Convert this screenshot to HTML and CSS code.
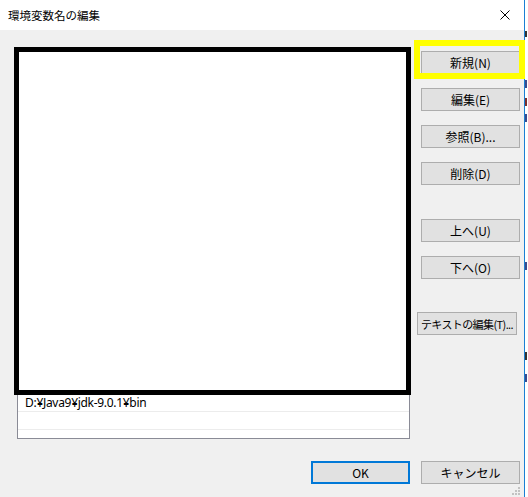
FILE: index.html
```html
<!DOCTYPE html>
<html lang="ja">
<head>
    <meta charset="utf-8">
    <title>環境変数名の編集</title>
    <link rel="stylesheet" href="styles.css">
</head>
<body>

<div class="screen">
    <div class="dialog">
        <div class="titlebar">
            <span class="title">環境変数名の編集</span>
            <span class="close">
                <svg width="10" height="10" viewBox="0 0 10 10"><path d="M0.5 0.5 L9.5 9.5 M9.5 0.5 L0.5 9.5" stroke="#000" stroke-width="1"/></svg>
            </span>
        </div>

        <div class="content">
            <div class="list-wrap">
                <div class="list">
                    <div class="list-hidden"></div>
                    <div class="row">D:¥Java9¥jdk-9.0.1¥bin</div>
                    <div class="row"></div>
                </div>
                <!-- redaction box over the list entries -->
                <div class="mask"></div>
            </div>

            <div class="side">
                <div class="btn-wrap">
                    <button class="btn">新規(N)</button>
                    <div class="mark"></div>
                </div>
                <button class="btn">編集(E)</button>
                <button class="btn">参照(B)...</button>
                <button class="btn">削除(D)</button>
                <button class="btn group">上へ(U)</button>
                <button class="btn">下へ(O)</button>
                <button class="btn group wide">テキストの編集(T)...</button>
            </div>
        </div>

        <div class="footer">
            <button class="btn default">OK</button>
            <button class="btn">キャンセル</button>
        </div>

        <svg class="grip" width="9" height="9" viewBox="0 0 9 9">
            <rect x="6" y="0" width="2" height="2" fill="#c2c2c2"/>
            <rect x="3" y="3" width="2" height="2" fill="#c2c2c2"/>
            <rect x="6" y="3" width="2" height="2" fill="#c2c2c2"/>
            <rect x="0" y="6" width="2" height="2" fill="#c2c2c2"/>
            <rect x="3" y="6" width="2" height="2" fill="#c2c2c2"/>
            <rect x="6" y="6" width="2" height="2" fill="#c2c2c2"/>
        </svg>
    </div>

    <!-- bit of the window behind -->
    <div class="behind">
        <span class="frag f1"></span>
        <span class="frag f2"></span>
        <span class="frag f3"></span>
        <span class="frag f4"></span>
        <span class="frag f5"></span>
        <span class="frag f6"></span>
        <span class="frag f7"></span>
    </div>
</div>

</body>
</html>
```

FILE: styles.css
```css
:root {
    --face: #f0f0f0;
    --btn-bg: #e1e1e1;
    --btn-border: #adadad;
    --accent: #1a7fd4;
    --ui-font: "Noto Sans", "Noto Sans CJK JP", sans-serif;
}

body {
    margin: 0;
    font-family: var(--ui-font);
    font-size: 12px;
    color: #000;
}

.screen {
    display: flex;
    width: 528px;
    height: 497px;
    overflow: hidden;
}

.dialog {
    position: relative;
    width: 524px;
    background: var(--face);
    border-right: 1px solid var(--accent);
}

.titlebar {
    height: 30px;
    background: #fff;
    display: flex;
    align-items: center;
    justify-content: space-between;
    padding: 0 14px 0 8px;
}

.title {
    font-family: "Noto Sans CJK JP", sans-serif;
    font-size: 11.5px;
    line-height: 14px;
}

.close {
    display: flex;
}

.content {
    display: flex;
    gap: 11px;
    padding: 21px 4px 0 17px;
}

.list-wrap {
    position: relative;
    width: 393px;
}

.list {
    height: 386px;
    background: #fff;
    border: 1px solid #8a8b96;
}

.list-hidden {
    height: 342px;
}

.row {
    height: 17px;
    line-height: 17px;
    padding-left: 7px;
    border-bottom: 1px solid #ececec;
    font-family: "Noto Sans", sans-serif;
    letter-spacing: -0.3px;
}

.mask {
    position: absolute;
    left: -3px;
    top: -4px;
    width: 387px;
    height: 338px;
    background: #fff;
    border: 5px solid #000;
}

.side {
    display: flex;
    flex-direction: column;
    gap: 14px;
    width: 99px;
}

.btn-wrap {
    position: relative;
    display: flex;
}

.btn {
    width: 99px;
    height: 23px;
    padding: 0;
    background: var(--btn-bg);
    border: 1px solid var(--btn-border);
    font-family: "Noto Sans CJK JP", sans-serif;
    font-size: 12px;
    color: #000;
    white-space: nowrap;
}

.btn.group {
    margin-top: 20px;
}

.btn.wide {
    width: 100px;
    margin-top: 19px;
    margin-left: -4px;
    font-size: 11px;
    letter-spacing: -0.6px;
}

.btn.default {
    border: 2px solid #0078d7;
}

.mark {
    position: absolute;
    left: -7px;
    top: -11px;
    width: 99px;
    height: 27px;
    border: 6px solid #ffff00;
}

.footer {
    display: flex;
    justify-content: flex-end;
    gap: 11px;
    padding: 22px 4px 0 0;
}

.grip {
    position: absolute;
    right: 3px;
    bottom: 1px;
}

.behind {
    position: relative;
    flex: 1;
    background: #fff;
}

.frag {
    position: absolute;
    left: 0;
    width: 2px;
    height: 8px;
}

.f1 { top: 31px; background: #333; height: 6px; }
.f2 { top: 80px; background: #3a4b8c; }
.f3 { top: 98px; background: #7a3030; }
.f4 { top: 114px; background: #3a4b8c; }
.f5 { top: 262px; background: #3a4b8c; }
.f6 { top: 352px; background: #333; }
.f7 { top: 374px; background: #3a4b8c; }
```
